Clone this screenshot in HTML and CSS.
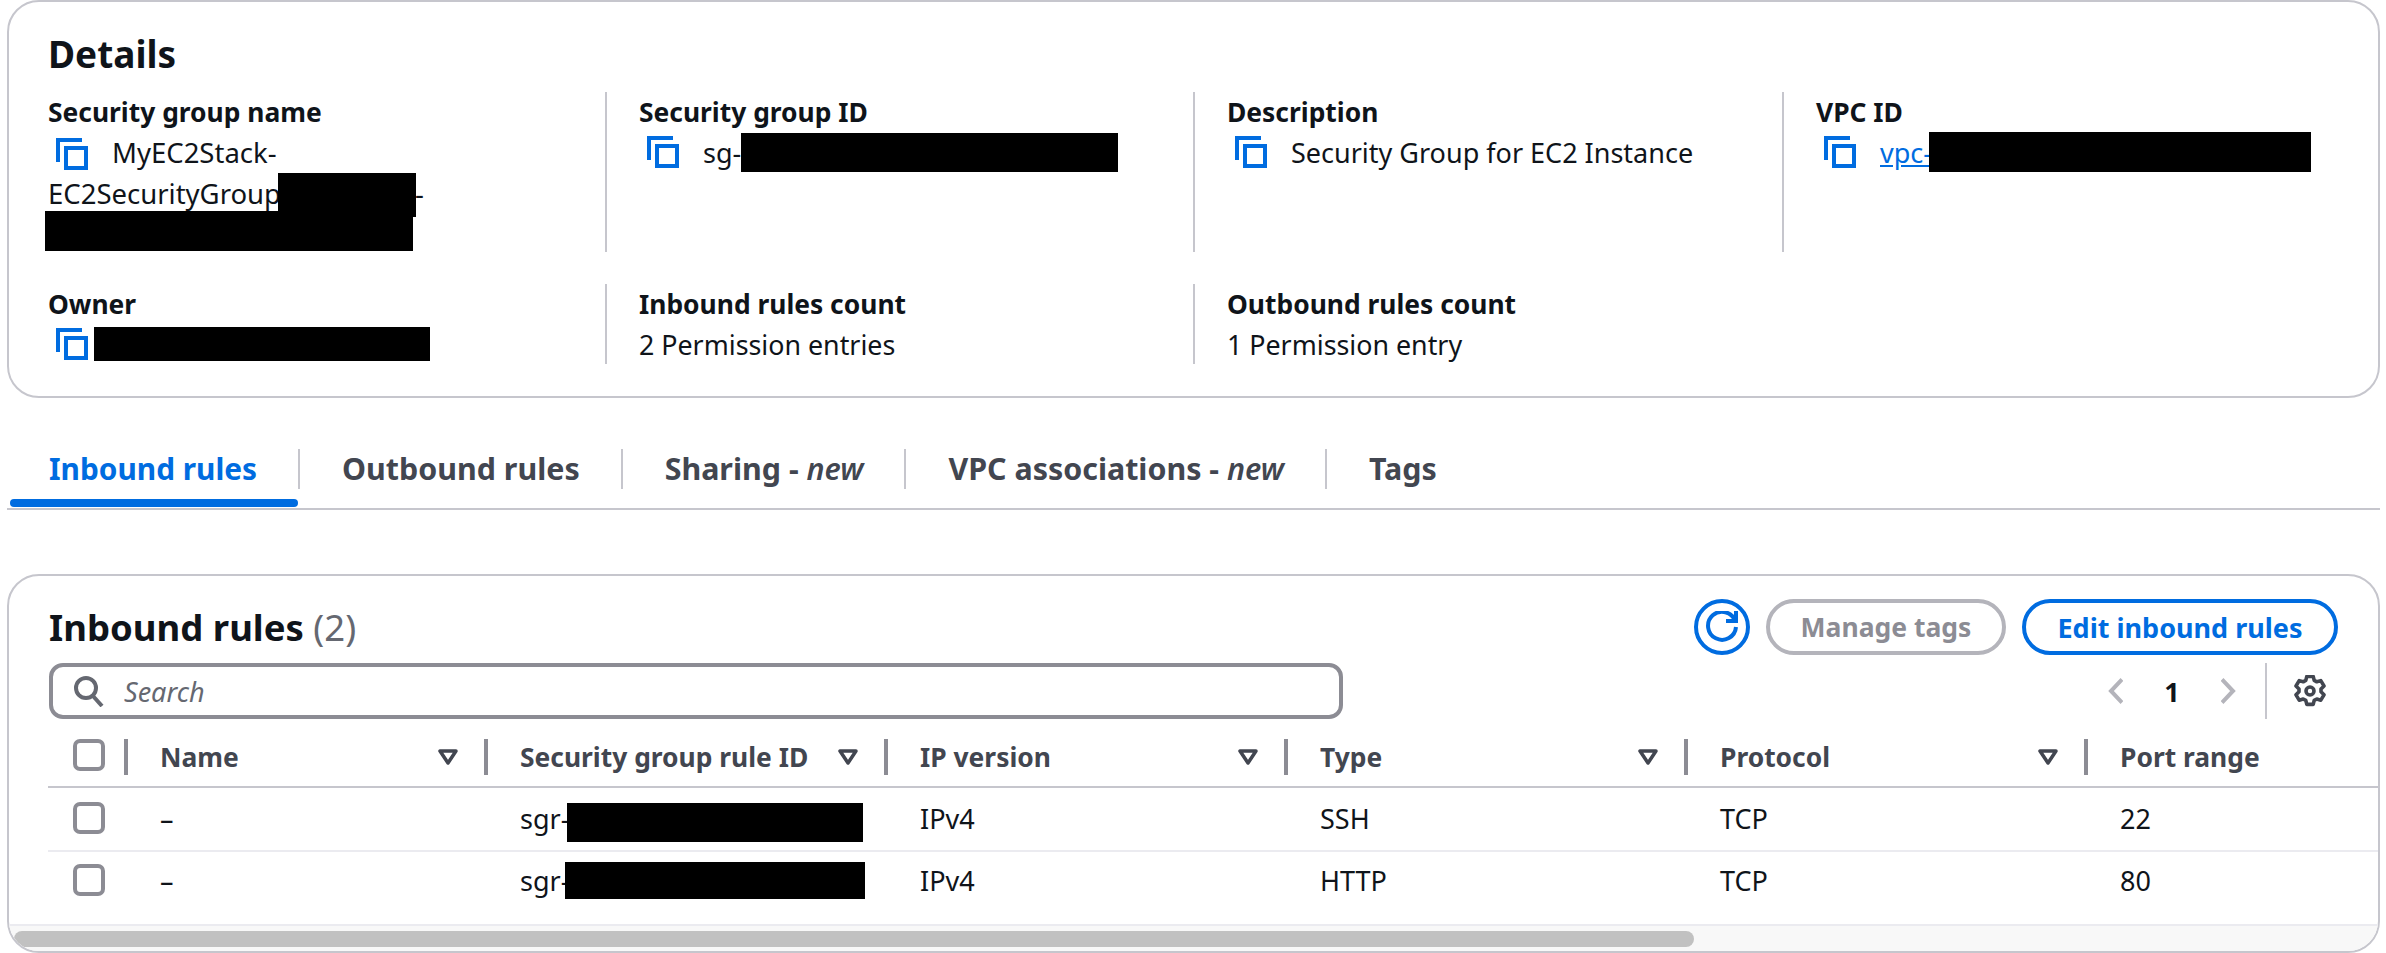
FILE: index.html
```html
<!DOCTYPE html>
<html lang="en">
<head>
  <meta charset="UTF-8">
  <title>Security group</title>
  <link rel="stylesheet" href="styles.css">
</head>
<body>
  <svg class="icon-defs" width="0" height="0" aria-hidden="true">
    <symbol id="copy" viewBox="0 0 16 16">
      <path d="M13 1H1v11" fill="none" stroke="currentColor" stroke-width="2"/>
      <rect x="5" y="5" width="10" height="10" fill="none" stroke="currentColor" stroke-width="2"/>
    </symbol>
    <symbol id="sort" viewBox="0 0 20 16">
      <path d="M2 2h16l-8 12z" fill="none" stroke="currentColor" stroke-width="3.5" stroke-linejoin="round"/>
    </symbol>
  </svg>

  <section class="card details">
    <h1 class="details-title">Details</h1>
    <div class="details-grid">
      <div class="cell name-cell">
        <div class="label">Security group name</div>
        <div class="name-value">
          <svg class="copy copy-inline"><use href="#copy"/></svg>MyEC2Stack-<br>
          EC2SecurityGroup<span class="name-gap"></span>-
        </div>
        <span class="redact redact-name-a"></span>
        <span class="redact redact-name-b"></span>
      </div>
      <div class="cell sep">
        <div class="label">Security group ID</div>
        <div class="value">
          <svg class="copy"><use href="#copy"/></svg>
          <span>sg-</span><span class="redact redact-sg"></span>
        </div>
      </div>
      <div class="cell sep">
        <div class="label">Description</div>
        <div class="value">
          <svg class="copy"><use href="#copy"/></svg>
          <span>Security Group for EC2 Instance</span>
        </div>
      </div>
      <div class="cell sep">
        <div class="label">VPC ID</div>
        <div class="value">
          <svg class="copy"><use href="#copy"/></svg>
          <a class="link" href="#">vpc-</a><span class="redact redact-vpc"></span>
        </div>
      </div>
      <div class="cell">
        <div class="label">Owner</div>
        <div class="value owner-value">
          <svg class="copy"><use href="#copy"/></svg>
          <span class="redact redact-owner"></span>
        </div>
      </div>
      <div class="cell sep">
        <div class="label">Inbound rules count</div>
        <div class="plain-value">2 Permission entries</div>
      </div>
      <div class="cell sep">
        <div class="label">Outbound rules count</div>
        <div class="plain-value">1 Permission entry</div>
      </div>
    </div>
  </section>

  <nav class="tabs">
    <a class="tab tab-active" href="#">Inbound rules</a>
    <a class="tab" href="#">Outbound rules</a>
    <a class="tab" href="#">Sharing - <em>new</em></a>
    <a class="tab" href="#">VPC associations - <em>new</em></a>
    <a class="tab tab-last" href="#">Tags</a>
  </nav>

  <section class="card rules">
    <div class="rules-head">
      <h2 class="rules-title">Inbound rules <span class="count">(2)</span></h2>
      <div class="actions">
        <button class="btn-round">
          <svg width="32" height="32" viewBox="0 0 16 16" fill="none" stroke="currentColor" stroke-width="2">
            <path d="M10 5h5V0"/>
            <path d="M14.6 5A7 7 0 1 0 15 8"/>
          </svg>
        </button>
        <button class="btn btn-disabled">Manage tags</button>
        <button class="btn btn-primary">Edit inbound rules</button>
      </div>
    </div>

    <div class="filter-row">
      <div class="search">
        <svg width="30" height="32" viewBox="0 0 30 32" fill="none" stroke="currentColor" stroke-width="4">
          <circle cx="12" cy="13" r="10"/>
          <path d="M19 21l9 10"/>
        </svg>
        <span>Search</span>
      </div>
      <div class="pager">
        <svg class="chevron" viewBox="0 0 15 26"><path d="M14 1.500L3 13l11 11.500"/></svg>
        <span class="page-num">1</span>
        <svg class="chevron" viewBox="0 0 15 26"><path d="M1 1.500L12 13 1 24.500"/></svg>
        <span class="pager-sep"></span>
        <svg class="gear" viewBox="0 .5 16 16" fill="none" stroke="currentColor" stroke-width="1.800" stroke-linejoin="round">
          <path d="M6.400 1.200h3.200l.5 2 1.300.7 2-.6 1.600 2.700-1.500 1.500v1.400l1.500 1.500-1.600 2.700-2-.6-1.300.7-.5 2H6.400l-.5-2-1.300-.7-2 .6L1 10.400l1.500-1.500V7.500L1 6l1.600-2.700 2 .6 1.300-.7z"/>
          <circle cx="8" cy="8.500" r="2"/>
        </svg>
      </div>
    </div>

    <div class="table">
      <div class="row row-head">
        <div class="th th-check"><span class="checkbox"></span></div>
        <div class="th">Name<svg class="sort"><use href="#sort"/></svg></div>
        <div class="th">Security group rule ID<svg class="sort"><use href="#sort"/></svg></div>
        <div class="th">IP version<svg class="sort"><use href="#sort"/></svg></div>
        <div class="th">Type<svg class="sort"><use href="#sort"/></svg></div>
        <div class="th">Protocol<svg class="sort"><use href="#sort"/></svg></div>
        <div class="th th-last">Port range</div>
      </div>
      <div class="row row-body">
        <div class="td td-check"><span class="checkbox"></span></div>
        <div class="td">–</div>
        <div class="td">sgr-<span class="redact redact-sgr-a"></span></div>
        <div class="td">IPv4</div>
        <div class="td">SSH</div>
        <div class="td">TCP</div>
        <div class="td">22</div>
      </div>
      <div class="row row-body row-end">
        <div class="td td-check"><span class="checkbox"></span></div>
        <div class="td">–</div>
        <div class="td">sgr-<span class="redact redact-sgr-b"></span></div>
        <div class="td">IPv4</div>
        <div class="td">HTTP</div>
        <div class="td">TCP</div>
        <div class="td">80</div>
      </div>
    </div>

    <div class="scroll-track"><div class="scroll-thumb"></div></div>
  </section>
</body>
</html>
```

FILE: styles.css
```css
* {
  box-sizing: border-box;
}
html, body {
  margin: 0;
  height: 953px;
  overflow: hidden;
}
body {
  padding: 0 6px 0 7px;
  background: #fff;
  color: #0f141a;
  font-family: "Noto Sans", sans-serif;
  font-size: 27px;
}
.icon-defs {
  position: absolute;
}
h1, h2 {
  margin: 0;
}
.card {
  border: 2px solid #c6c6cd;
  border-radius: 32px;
  background: #fff;
  overflow: hidden;
}

/* details */
.details {
  height: 398px;
  padding: 0 0 0 39px;
}
.details-title {
  height: 90px;
  padding-top: 29px;
  font-size: 37px;
  line-height: 46px;
  font-weight: 700;
}
.details-grid {
  display: grid;
  grid-template-columns: 557px 588px 589px 1fr;
  grid-template-rows: 160px 80px;
  row-gap: 32px;
}
.cell {
  position: relative;
  min-width: 0;
}
.sep {
  border-left: 2px solid #c6c6cd;
  padding-left: 32px;
}
.label {
  font-size: 26.400px;
  font-weight: 700;
  line-height: 40px;
}
.value {
  display: flex;
  align-items: center;
  height: 40px;
  white-space: nowrap;
}
.plain-value {
  padding-top: 1px;
  font-size: 26.800px;
  line-height: 40px;
}
.copy {
  flex: none;
  width: 32px;
  height: 32px;
  margin: 0 24px 0 8px;
  color: #006ce0;
}
.copy-inline {
  vertical-align: -7px;
}
.name-value {
  font-size: 27.500px;
  line-height: 41px;
}
.name-gap {
  display: inline-block;
  width: 134px;
}
.owner-value .copy {
  margin-right: 6px;
}
.link {
  color: #006ce0;
}
.redact {
  flex: none;
  display: inline-block;
  background: #000;
}
.redact-name-a {
  position: absolute;
  left: 230px;
  top: 81px;
  width: 138px;
  height: 44px;
}
.redact-name-b {
  position: absolute;
  left: -3px;
  top: 119px;
  width: 368px;
  height: 40px;
}
.redact-sg {
  width: 377px;
  height: 39px;
}
.redact-vpc {
  width: 382px;
  height: 40px;
  margin-left: -3px;
}
.redact-owner {
  width: 336px;
  height: 34px;
}

/* tabs */
.tabs {
  position: relative;
  display: flex;
  height: 112px;
  padding-top: 51px;
  border-bottom: 2px solid #c6c6cd;
}
.tab {
  height: 40px;
  padding: 0 41px 0 42px;
  border-right: 2px solid #c6c6cd;
  color: #424650;
  font-size: 30.400px;
  font-weight: 700;
  line-height: 40px;
  text-decoration: none;
  white-space: nowrap;
}
.tab em {
  font-weight: 600;
}
.tab-last {
  border-right: 0;
}
.tab-active {
  position: relative;
  color: #006ce0;
  font-size: 29.800px;
}
.tab-active::after {
  content: "";
  position: absolute;
  left: 3px;
  right: 0;
  top: 50px;
  height: 8px;
  border-radius: 4px;
  background: #006ce0;
}

/* rules card */
.rules {
  height: 379px;
  margin-top: 64px;
  display: flex;
  flex-direction: column;
}
.rules-head {
  display: flex;
  justify-content: space-between;
  align-items: center;
  height: 56px;
  margin-top: 23px;
  padding: 0 40px;
}
.rules-title {
  font-size: 36.500px;
  font-weight: 700;
  line-height: 56px;
}
.count {
  color: #656871;
  font-weight: 400;
}
.actions {
  display: flex;
  align-items: center;
  gap: 16px;
}
.btn-round {
  display: flex;
  align-items: center;
  justify-content: center;
  width: 56px;
  height: 56px;
  padding: 0;
  border: 4px solid #006ce0;
  border-radius: 50%;
  background: #fff;
  color: #006ce0;
}
.btn {
  height: 56px;
  padding: 0;
  border: 4px solid;
  border-radius: 28px;
  background: #fff;
  font-family: inherit;
  font-size: 27px;
  font-weight: 700;
}
.btn-disabled {
  width: 240px;
  border-color: #b4b4bb;
  color: #8c8c94;
  font-size: 26.500px;
}
.btn-primary {
  width: 316px;
  border-color: #006ce0;
  color: #006ce0;
}
.filter-row {
  display: flex;
  justify-content: space-between;
  height: 56px;
  margin-top: 8px;
  padding: 0 52px 0 40px;
}
.search {
  display: flex;
  align-items: center;
  gap: 20px;
  width: 1294px;
  padding-left: 21px;
  border: 4px solid #8c8c94;
  border-radius: 14px;
  color: #656871;
  font-style: italic;
}
.search svg {
  flex: none;
}
.pager {
  display: flex;
  align-items: center;
}
.chevron {
  width: 15px;
  height: 26px;
  fill: none;
  stroke: #b4b4bb;
  stroke-width: 4;
}
.page-num {
  width: 98px;
  text-align: center;
  font-weight: 700;
}
.pager-sep {
  align-self: stretch;
  width: 2px;
  margin: 0 27px 0 29px;
  background: #c6c6cd;
}
.gear {
  width: 32px;
  height: 32px;
  color: #424650;
}

/* table */
.table {
  flex: 1;
  margin-left: 39px;
}
.row {
  display: grid;
  grid-template-columns: 76px 360px 400px 400px 400px 400px 1fr;
}
.row-head {
  height: 69px;
  padding-top: 20px;
  border-bottom: 2px solid #c6c6cd;
}
.row-body {
  height: 64px;
  border-bottom: 2px solid #ebebf0;
}
.row-end {
  border-bottom: 0;
}
.th {
  display: flex;
  align-items: center;
  justify-content: space-between;
  height: 36px;
  padding: 0 26px 0 32px;
  border-left: 4px solid #8c8c94;
  color: #424650;
  font-size: 26.400px;
  font-weight: 700;
  white-space: nowrap;
}
.th-check {
  padding: 0 0 0 25px;
  border-left: 0;
  border-right: 4px solid #c6c6cd;
  margin-right: -4px;
  align-items: flex-start;
}
.th-last {
  justify-content: flex-start;
}
.td {
  display: flex;
  align-items: center;
  height: 60px;
  padding-left: 36px;
  white-space: nowrap;
}
.row-end .td {
  height: 56px;
}
.td-check {
  padding-left: 25px;
}
.checkbox {
  display: block;
  width: 32px;
  height: 32px;
  border: 4px solid #8c8c94;
  border-radius: 7px;
}
.sort {
  flex: none;
  width: 20px;
  height: 16px;
  color: #424650;
}
.redact-sgr-a {
  width: 296px;
  height: 39px;
  margin: 9px 0 0 -2px;
}
.redact-sgr-b {
  width: 300px;
  height: 37px;
  margin-left: -4px;
}
.scroll-track {
  flex: none;
  height: 27px;
  padding: 5px 0 0 5px;
  border-top: 2px solid #ebebf0;
  background: #f8f8f8;
}
.scroll-thumb {
  width: 1680px;
  height: 16px;
  border-radius: 8px;
  background: #c1c1c1;
}
```
